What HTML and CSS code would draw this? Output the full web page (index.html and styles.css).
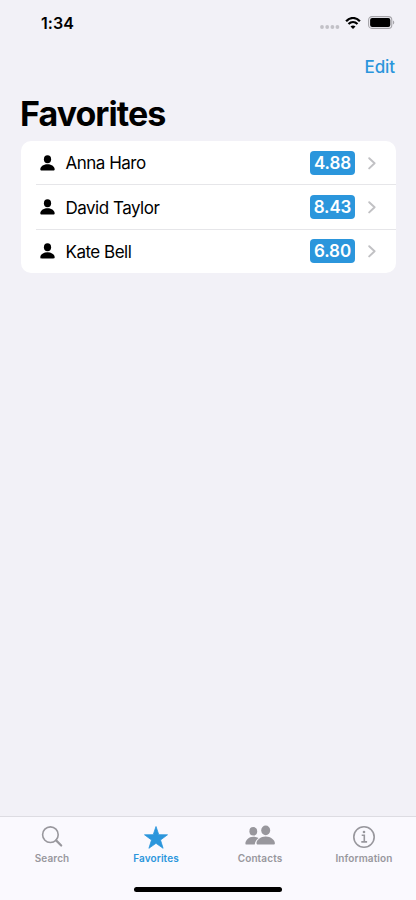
FILE: index.html
```html
<!DOCTYPE html>
<html lang="en">
<head>
<meta charset="utf-8">
<title>Favorites</title>
<link rel="stylesheet" href="styles.css">
</head>
<body>
<svg class="defs" width="0" height="0" aria-hidden="true">
  <symbol id="person" viewBox="0 0 16 16"><ellipse cx="7.5" cy="4.2" rx="3.6" ry="4"/><path d="M7.5 9.2c4.4 0 7.2 2.6 7.2 5.1 0 .8-.5 1.2-1.4 1.2H1.7c-.9 0-1.4-.4-1.4-1.2 0-2.5 2.8-5.1 7.2-5.1z"/></symbol>
  <symbol id="chevron" viewBox="0 0 8 13"><path d="M1.2 1.2 6.6 6.3 1.2 11.4"/></symbol>
</svg>
<div class="screen">
  <header class="status">
    <span class="time">1:34</span>
    <div class="indicators">
      <svg class="dots" width="20" height="4" viewBox="0 0 20 4"><circle cx="2" cy="2" r="1.9"/><circle cx="7.2" cy="2" r="1.9"/><circle cx="12.4" cy="2" r="1.9"/><circle cx="17.4" cy="2" r="1.9"/></svg>
      <svg class="wifi" width="16" height="12" viewBox="0 0 16 12"><path class="arc" d="M1.1 4.2C5-.1 11-.1 14.9 4.2M3.5 7c2.6-2.5 6.4-2.5 9 0"/><path d="M8 11.9 5.5 9.4c1.4-1.3 3.6-1.3 5 0z"/></svg>
      <svg class="battery" width="27" height="13" viewBox="0 0 27 13"><rect class="shell" x=".6" y=".6" width="23.2" height="11.8" rx="3.4"/><rect x="2.1" y="2.1" width="20.2" height="8.8" rx="2"/><path class="cap" d="M25 4.4c1.7.7 1.7 3.5 0 4.2z"/></svg>
    </div>
  </header>
  <nav class="toolbar"><a class="edit">Edit</a></nav>
  <h1>Favorites</h1>
  <main>
    <ul class="list">
      <li><svg class="person"><use href="#person"/></svg><div class="row"><span class="name">Anna Haro</span><span class="badge">4.88</span><svg class="chevron"><use href="#chevron"/></svg></div></li>
      <li><svg class="person"><use href="#person"/></svg><div class="row"><span class="name">David Taylor</span><span class="badge">8.43</span><svg class="chevron"><use href="#chevron"/></svg></div></li>
      <li><svg class="person"><use href="#person"/></svg><div class="row"><span class="name">Kate Bell</span><span class="badge">6.80</span><svg class="chevron"><use href="#chevron"/></svg></div></li>
    </ul>
  </main>
  <footer>
    <div class="tabs">
      <a class="tab"><svg width="32" height="24" viewBox="0 0 32 24"><g class="line"><circle cx="14.4" cy="9.7" r="7.8"/><path class="handle" d="m20.1 15.4 5.1 5.1"/></g></svg><span>Search</span></a>
      <a class="tab active"><svg width="32" height="24" viewBox="0 0 32 24"><path class="star" d="m16 1.5 2.8 8.2 8.7.1-7 5.2 2.6 8.3-7.1-5-7.1 5 2.6-8.3-7-5.2 8.7-.1z"/></svg><span>Favorites</span></a>
      <a class="tab"><svg width="32" height="24" viewBox="0 0 32 24"><ellipse cx="9.3" cy="6.3" rx="3.9" ry="4.2"/><path d="M9.2 11.7c2.1 0 3.9.5 5.4 1.2-2 1.4-3.6 3.7-3.9 6.7H2.8c-.9 0-1.4-.4-1.4-1.2 0-3 3.4-6.7 7.8-6.7z"/><ellipse cx="21.7" cy="5.4" rx="4.5" ry="4.8"/><path d="M21.7 11.5c5.1 0 9.2 3.5 9.2 6.7 0 .9-.5 1.4-1.5 1.4H14c-1 0-1.5-.5-1.5-1.4 0-3.2 4.1-6.7 9.2-6.7z"/></svg><span>Contacts</span></a>
      <a class="tab"><svg width="32" height="24" viewBox="0 0 32 24"><g class="line"><circle cx="16" cy="12" r="10.2"/><path d="M13.7 10.3h2.6v6.6M13.3 16.9h5.8"/></g><circle cx="16" cy="7" r="1.3"/></svg><span>Information</span></a>
    </div>
    <div class="home"></div>
  </footer>
</div>
</body>
</html>
```
FILE: styles.css
```css
* { box-sizing: border-box; }
body { margin: 0; font-family: Inter, "Liberation Sans", sans-serif; color: #000; }
.defs { position: absolute; }
svg { display: block; flex: none; }
.screen { height: 900px; display: flex; flex-direction: column; background: #f2f1f7; overflow: hidden; }
.status { height: 45px; padding: 0 21px 0 41px; display: flex; align-items: center; justify-content: space-between; }
.time { font-size: 16px; font-weight: 600; letter-spacing: .1px; }
.indicators { display: flex; align-items: center; }
.dots { fill: #c2c1c7; margin: 8px 5px 0 0; }
.wifi { margin-right: 7px; }
.arc { fill: none; stroke: #000; stroke-width: 2.2; }
.shell { fill: none; stroke: #a5a4a9; stroke-width: 1.1; }
.cap { fill: #a5a4a9; }
.toolbar { height: 44px; padding: 0 21px; display: flex; align-items: center; justify-content: flex-end; }
.edit { color: #2b96dc; font-size: 17px; font-weight: 500; letter-spacing: -.1px; }
h1 { margin: 0; height: 52px; padding: 4px 20px 0; font-size: 34px; line-height: 42px; font-weight: 700; letter-spacing: -.95px; }
main { flex: 1; padding: 0 20.5px; }
.list { margin: 0; padding: 0; list-style: none; background: #fff; border-radius: 10px; }
.list li { height: 44px; padding-left: 19.5px; display: flex; align-items: center; position: relative; }
.list li + li { height: 44.2px; }
.list li + li::before { content: ""; position: absolute; left: 15.5px; right: 0; top: -.6px; height: 1px; background: #e6e6e9; }
.list li + li .name { padding-top: 1px; }
.person { width: 16px; height: 16px; margin-right: 9.5px; }
.row { flex: 1; display: flex; align-items: center; padding-right: 19.5px; }
.name { flex: 1; font-size: 17px; letter-spacing: -.5px; }
.badge { width: 45px; height: 24px; margin-right: 13px; border-radius: 4px; background: #2b96dc; color: #fff; font-size: 17px; line-height: 25px; font-weight: 600; letter-spacing: -.1px; text-align: center; }
.chevron { width: 8px; height: 13px; fill: none; stroke: #c1c1c4; stroke-width: 1.9; stroke-linecap: round; stroke-linejoin: round; }
footer { height: 84px; background: #faf9fe; border-top: 1px solid #dddce2; }
.tabs { display: flex; height: 70px; padding-top: 8px; }
.tab { flex: 1; display: flex; flex-direction: column; align-items: center; color: #98979d; fill: currentColor; font-size: 10px; line-height: 14px; font-weight: 600; letter-spacing: .12px; }
.tab span { margin-top: 2px; }
.active { color: #2b96dc; }
.line { fill: none; stroke: currentColor; stroke-width: 1.6; }
.handle { stroke-width: 2.2; stroke-linecap: round; }
.star { stroke: currentColor; stroke-width: .8; stroke-linejoin: round; }
.home { width: 148px; height: 5px; margin: 0 auto; border-radius: 3px; background: #000; }
```
